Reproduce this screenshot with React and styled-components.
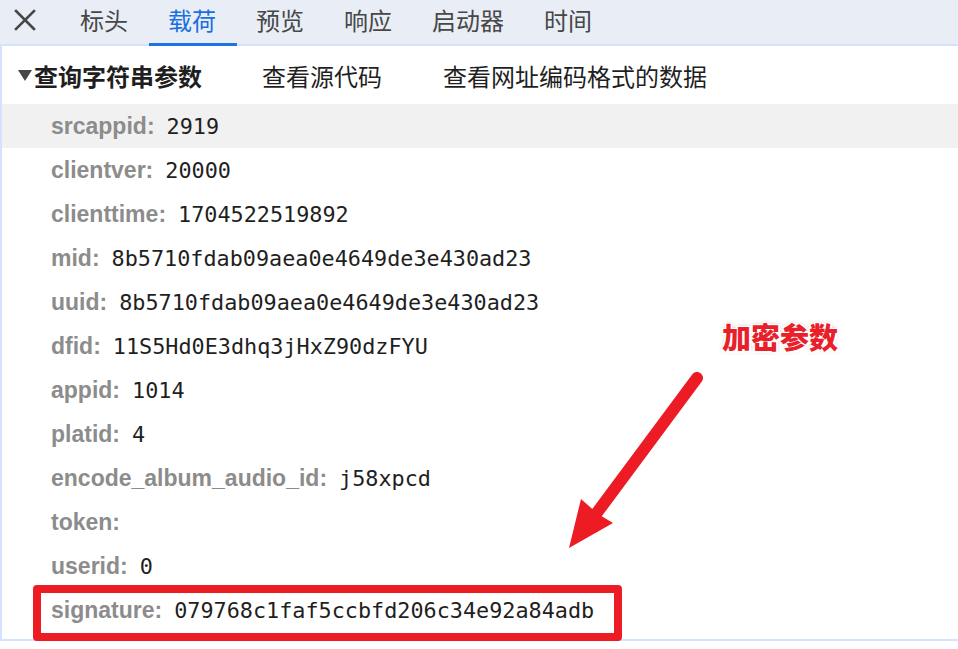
import React from "react";
import styled, { createGlobalStyle, css } from "styled-components";

const GlobalStyle = createGlobalStyle`
  html, body {
    margin: 0;
    padding: 0;
    background: #fff;
  }
  body {
    font-family: "Noto Sans CJK SC", "Noto Sans", sans-serif;
  }
`;

const RED = "#ed1c24";
const LINE = "#d3e3fd";

const Page = styled.div`
  position: relative;
  width: 958px;
  height: 649px;
  overflow: hidden;
  background: #fff;
`;

const TabBar = styled.div`
  display: flex;
  align-items: stretch;
  height: 44px;
  background: #e9eef6;
  border-bottom: 2px solid ${LINE};
`;

const CloseButton = styled.div`
  width: 60px;
  display: flex;
  align-items: center;
  justify-content: center;
  padding: 0 10px 5px 0;
  box-sizing: border-box;
  color: #474747;
`;

const Tab = styled.div`
  position: relative;
  display: flex;
  align-items: center;
  padding: 0 20px 6px;
  font-size: 24px;
  color: #474747;
  white-space: nowrap;

  ${(p) =>
    p.$active &&
    css`
      color: #1a6fe0;
      &::after {
        content: "";
        position: absolute;
        left: 1px;
        right: -1px;
        bottom: -2px;
        height: 3px;
        background: #1a73e8;
      }
    `}
`;

const Panel = styled.div`
  border-left: 2px solid ${LINE};
  border-bottom: 2px solid ${LINE};
  padding-bottom: 7px;
`;

const SectionHeader = styled.div`
  display: flex;
  align-items: center;
  height: 58px;
  padding-left: 16px;
  font-size: 24px;
  color: #1f1f1f;
`;

const Caret = styled.span`
  width: 0;
  height: 0;
  border-left: 7.5px solid transparent;
  border-right: 7.5px solid transparent;
  border-top: 11px solid #474747;
  margin-right: 2px;
`;

const Title = styled.span`
  font-weight: 700;
  margin-right: 60px;
`;

const HeaderLink = styled.span`
  margin-right: 61px;
`;

const Row = styled.div`
  position: relative;
  display: flex;
  align-items: center;
  height: 44px;
  padding-left: 49px;
  background: ${(p) => (p.$hover ? "#f1f1f1" : "transparent")};
`;

const Key = styled.span`
  font-family: "Liberation Sans", "Noto Sans", sans-serif;
  font-weight: 700;
  font-size: 23px;
  color: #8c8c8c;
`;

const Value = styled.span`
  margin-left: 12px;
  font-family: "DejaVu Sans Mono", "Liberation Mono", monospace;
  font-size: 21.8px;
  color: #1f1f1f;
`;

const Highlight = styled.div`
  position: absolute;
  left: 31px;
  top: -3px;
  width: 589px;
  height: 56px;
  box-sizing: border-box;
  border: 8px solid ${RED};
  border-radius: 4px;
  pointer-events: none;
`;

const Note = styled.div`
  position: absolute;
  left: 722px;
  top: 315px;
  font-size: 29px;
  font-weight: 900;
  color: #e8202a;
  text-shadow:
    -1.5px -1.5px 0 #fff, 1.5px -1.5px 0 #fff, -1.5px 1.5px 0 #fff, 1.5px 1.5px 0 #fff,
    0 0 4px rgba(0, 0, 0, 0.35);
`;

const ArrowLayer = styled.svg`
  position: absolute;
  left: 0;
  top: 0;
  pointer-events: none;
`;

const tabs = ["标头", "载荷", "预览", "响应", "启动器", "时间"];

const params = [
  ["srcappid", "2919"],
  ["clientver", "20000"],
  ["clienttime", "1704522519892"],
  ["mid", "8b5710fdab09aea0e4649de3e430ad23"],
  ["uuid", "8b5710fdab09aea0e4649de3e430ad23"],
  ["dfid", "11S5Hd0E3dhq3jHxZ90dzFYU"],
  ["appid", "1014"],
  ["platid", "4"],
  ["encode_album_audio_id", "j58xpcd"],
  ["token", ""],
  ["userid", "0"],
  ["signature", "079768c1faf5ccbfd206c34e92a84adb"],
];

export default function App() {
  return (
    <>
      <GlobalStyle />
      <Page>
        <TabBar>
          <CloseButton>
            <svg width="22" height="22" viewBox="0 0 22 22">
              <path
                d="M2 2 L20 20 M20 2 L2 20"
                stroke="currentColor"
                strokeWidth="2.6"
                strokeLinecap="square"
              />
            </svg>
          </CloseButton>
          {tabs.map((t) => (
            <Tab key={t} $active={t === "载荷"}>
              {t}
            </Tab>
          ))}
        </TabBar>

        <Panel>
          <SectionHeader>
            <Caret />
            <Title>查询字符串参数</Title>
            <HeaderLink>查看源代码</HeaderLink>
            <HeaderLink>查看网址编码格式的数据</HeaderLink>
          </SectionHeader>

          {params.map(([k, v], i) => (
            <Row key={k} $hover={i === 0}>
              <Key>{k}:</Key>
              {v && <Value>{v}</Value>}
              {k === "signature" && <Highlight />}
            </Row>
          ))}
        </Panel>

        <Note>加密参数</Note>
        <ArrowLayer width="958" height="649" viewBox="0 0 958 649">
          <line
            x1="697"
            y1="378"
            x2="596"
            y2="514"
            stroke={RED}
            strokeWidth="12"
            strokeLinecap="round"
          />
          <polygon points="569,548 581,499 598,514 613,523" fill={RED} />
        </ArrowLayer>
      </Page>
    </>
  );
}
